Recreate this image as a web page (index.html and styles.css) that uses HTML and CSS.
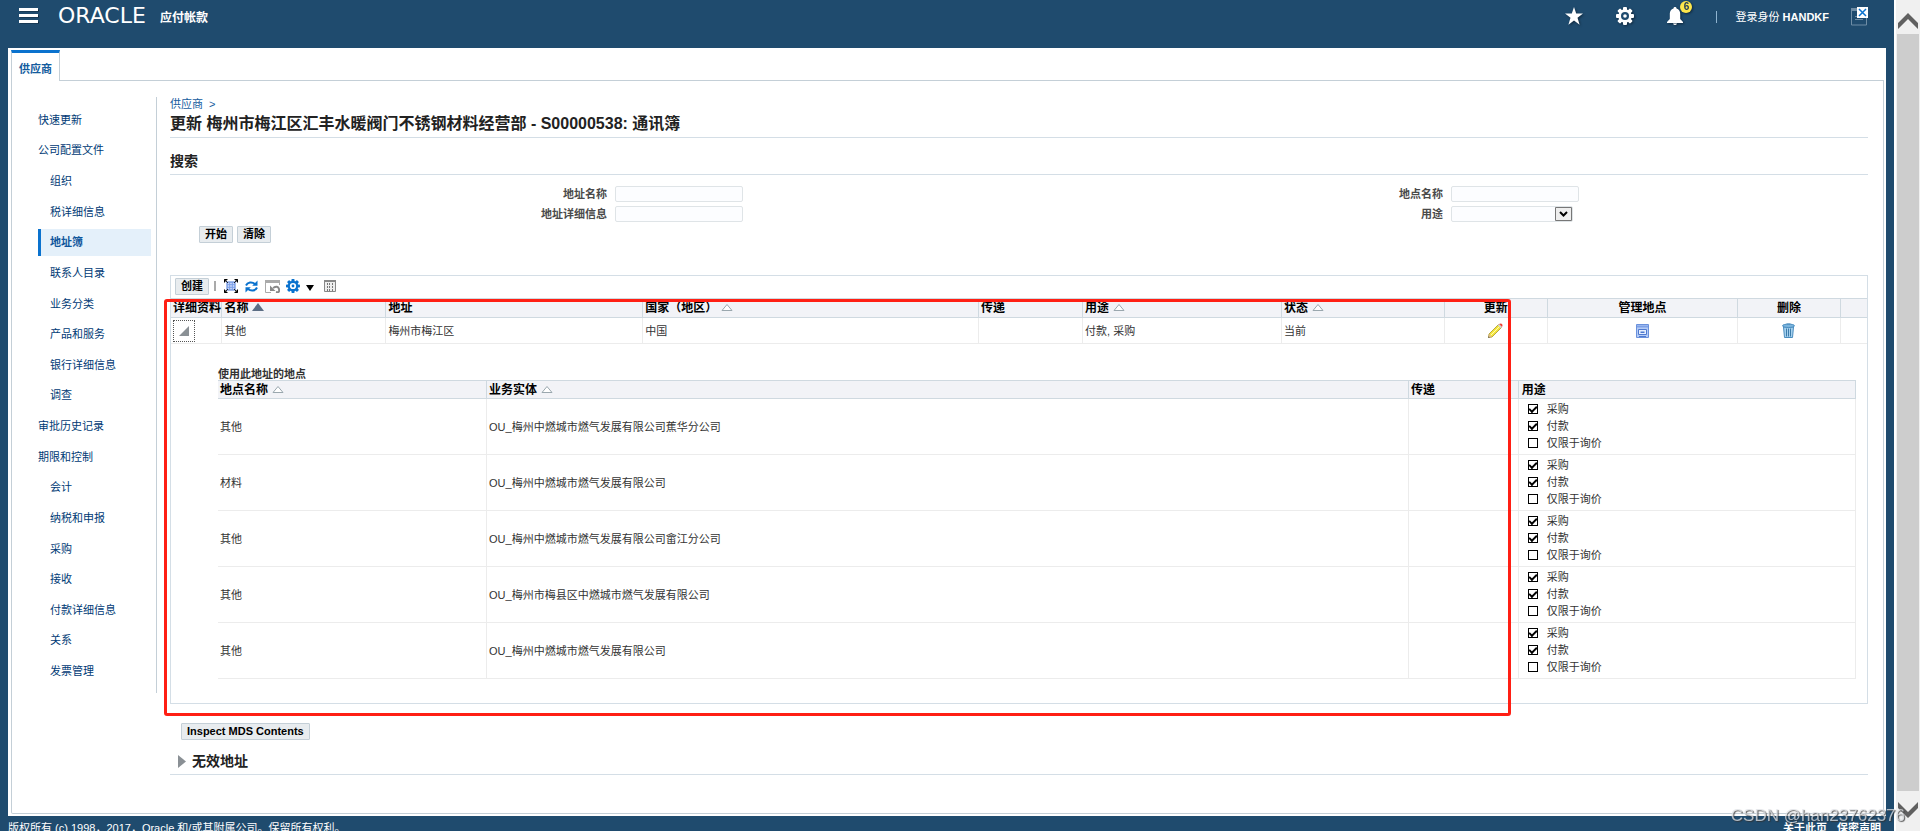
FILE: index.html
```
<!DOCTYPE html>
<html lang="zh-CN">
<head>
<meta charset="utf-8">
<title>供应商 - 通讯簿</title>
<link rel="stylesheet" href="styles.css">
</head>
<body>
<svg class="defs" aria-hidden="true">
  <symbol id="gear" viewBox="0 0 18 18"><g fill="currentColor"><g id="teeth"><rect x="7" y="0" width="4" height="18" rx="1"/><rect x="0" y="7" width="18" height="4" rx="1"/></g><use href="#teeth" transform="rotate(45 9 9)"/></g><circle cx="9" cy="9" r="5.2" fill="none" stroke="currentColor" stroke-width="3"/><circle cx="9" cy="9" r="4" class="gear-hole"/><circle cx="9" cy="9" r="1.8" fill="currentColor"/></symbol>
  <symbol id="sort" viewBox="0 0 12 8"><path d="M1 7.5 6 1.5l5 6z" fill="#fff" stroke="#9aa7ae"/></symbol>
  <symbol id="sorted" viewBox="0 0 12 8"><path d="M0 8 6 0l6 8z" fill="#5b6d84"/></symbol>
</svg>
<div class="app">
  <header class="topbar">
    <button class="icon-btn menu" aria-label="菜单"><svg width="20" height="16" viewBox="0 0 20 16"><path d="M1 2.500h19M1 8.500h19M1 14.500h19" stroke="#10283d" stroke-width="2"/><path d="M0 1.500h19M0 7.500h19M0 13.500h19" stroke="#fff" stroke-width="3"/></svg></button>
    <span class="brand">ORACLE</span>
    <h1 class="product">应付帐款</h1>
    <nav class="tools">
      <button class="icon-btn" aria-label="收藏夹"><svg width="18" height="18" viewBox="0 0 18 18"><path d="M9 0l2.200 6.500H18l-5.500 4.200 2.100 7L9 13.500l-5.600 4.200 2.100-7L0 6.500h6.800z" fill="#fff"/></svg></button>
      <button class="icon-btn" aria-label="设置"><svg class="gear-top" width="18" height="18"><use href="#gear"/></svg></button>
      <button class="icon-btn bell" aria-label="通知"><svg width="16" height="18" viewBox="0 0 16 18"><path d="M8 0c1 0 1.500.6 1.500 1.400C12 2 13.200 4.200 13.200 6.500V12L16 15v1H0v-1l2.800-3V6.500C2.800 4.200 4 2 6.500 1.400 6.500.6 7 0 8 0zM6 16.500h4Q9.500 18 8 18t-2-1.500z" fill="#fff"/></svg><span class="badge">6</span></button>
      <span class="user">登录身份 <b>HANDKF</b></span>
      <svg class="missing" width="17" height="20" viewBox="0 0 17 20"><path d="M.5 3.500v14.500h15V10" fill="none" stroke="#6f8da5"/><path d="M0 1h6v3H0z" fill="#6f8da5"/><path d="M4 9.500h8M4 12.500h8" stroke="#6f8da5"/><path d="M6 0h11v11H6z" fill="#fff"/><path d="M8 2l7 7M15 2l-7 7" stroke="#0a72ce" stroke-width="1.500"/></svg>
    </nav>
  </header>

  <main class="sheet">
    <div class="tabs"><a class="tab" href="#">供应商</a></div>
    <div class="frame">
      <nav class="side">
        <a href="#">快速更新</a>
        <a href="#">公司配置文件</a>
        <a href="#" class="sub">组织</a>
        <a href="#" class="sub">税详细信息</a>
        <a href="#" class="sub current">地址簿</a>
        <a href="#" class="sub">联系人目录</a>
        <a href="#" class="sub">业务分类</a>
        <a href="#" class="sub">产品和服务</a>
        <a href="#" class="sub">银行详细信息</a>
        <a href="#" class="sub">调查</a>
        <a href="#">审批历史记录</a>
        <a href="#">期限和控制</a>
        <a href="#" class="sub">会计</a>
        <a href="#" class="sub">纳税和申报</a>
        <a href="#" class="sub">采购</a>
        <a href="#" class="sub">接收</a>
        <a href="#" class="sub">付款详细信息</a>
        <a href="#" class="sub">关系</a>
        <a href="#" class="sub">发票管理</a>
      </nav>

      <div class="content">
        <div class="crumbs"><a href="#">供应商</a><span>&gt;</span></div>
        <h2 class="title">更新 梅州市梅江区汇丰水暖阀门不锈钢材料经营部 - S00000538: 通讯簿</h2>
        <h3 class="section">搜索</h3>

        <form class="search">
          <label for="addr">地址名称</label><input id="addr" type="text">
          <label for="site">地点名称</label><input id="site" type="text">
          <label for="detail">地址详细信息</label><input id="detail" type="text">
          <label for="use">用途</label>
          <span class="picker"><select id="use"><option></option></select><svg width="17" height="14" viewBox="0 0 17 14"><path d="M.5.500h16v13H.5z" fill="#eee" stroke="#777"/><path d="M5 5l3.500 3.500L12 5" fill="none" stroke="#000" stroke-width="2"/></svg></span>
        </form>
        <div class="actions"><button class="btn">开始</button><button class="btn">清除</button></div>

        <section class="panel">
          <div class="toolbar">
            <button class="btn">创建</button>
            <span class="sep"></span>
            <button class="icon-btn expand" aria-label="展开"><svg width="14" height="14" viewBox="0 0 14 14"><path d="M3 3h8v8H3z" fill="#cfdcf8" stroke="#4a78d8"/><path d="M3 5.700h8M3 8.300h8M5.700 3v8M8.300 3v8" stroke="#7c9fe8"/><path d="M0 0h4L0 4zM14 0v4l-4-4zM0 14v-4l4 4zM14 14h-4l4-4z" fill="#000"/><path d="M0 0l4 4M14 0l-4 4M0 14l4-4M14 14l-4-4" stroke="#222"/></svg></button>
            <button class="icon-btn refresh" aria-label="刷新"><svg width="13" height="13" viewBox="0 0 13 13"><path d="M1 5.500C2.500 2 7 1.500 10 4M12 7.500C10.500 11 6 11.500 3 9" fill="none" stroke="#0a72ce" stroke-width="2"/><path d="M12.500.500v5.300H7.200zM.5 12.500V7.200h5.300z" fill="#0a72ce"/></svg></button>
            <button class="icon-btn detach" aria-label="分离"><svg width="15" height="13" viewBox="0 0 15 13"><path d="M.5 1v11.500H6M14.500 1v4" fill="none" stroke="#aaa"/><path d="M0 0h15v3H0z" fill="#aaa"/><path d="M8 8q5-3 6 1t-3 3" fill="none" stroke="#888" stroke-width="2"/><path d="M5 5.500V11h5.500z" fill="#888"/></svg></button>
            <button class="icon-btn gear-blue" aria-label="操作"><svg width="14" height="14"><use href="#gear"/></svg></button>
            <svg class="caret" width="8" height="6" viewBox="0 0 8 6"><path d="M0 0h8L4 6z"/></svg>
            <button class="icon-btn" aria-label="列"><svg width="12" height="12" viewBox="0 0 12 12"><path d="M.5.500h11v11H.5z" fill="#eee" stroke="#888"/><path d="M0 1h12" stroke="#888" stroke-width="2"/><path d="M3.500 3v8M5.500 3v8M8.500 3v8" stroke="#777" stroke-dasharray="2 1"/></svg></button>
          </div>

          <table class="grid">
            <colgroup><col class="c-detail"><col class="c-name"><col class="c-addr"><col class="c-country"><col class="c-pass"><col class="c-use"><col class="c-state"><col class="c-act"><col class="c-manage"><col class="c-act"><col></colgroup>
            <thead><tr>
              <th>详细资料</th><th>名称<svg class="sort"><use href="#sorted"/></svg></th><th>地址</th><th>国家（地区）<svg class="sort"><use href="#sort"/></svg></th><th>传递</th><th>用途<svg class="sort"><use href="#sort"/></svg></th><th>状态<svg class="sort"><use href="#sort"/></svg></th><th class="mid">更新</th><th class="mid">管理地点</th><th class="mid">删除</th><th></th>
            </tr></thead>
            <tbody>
              <tr class="line">
                <td><button class="toggle" aria-label="隐藏详细资料"><svg width="10" height="10" viewBox="0 0 10 10"><path d="M0 10 10 0v10z" fill="#8a9095"/></svg></button></td>
                <td>其他</td><td>梅州市梅江区</td><td>中国</td><td></td><td>付款, 采购</td><td>当前</td>
                <td class="mid"><button class="icon-btn" aria-label="更新"><svg width="15" height="15" viewBox="0 0 15 15"><path d="M1 11 10.500 1.500l3 3L4 14l-3.500.500z" fill="#f3e53a" stroke="#a8932c" stroke-width=".8"/><path d="M2.500 12.500 12 3" stroke="#fffbb0"/><path d="M9.800 2.200 11 1l3 3-1.200 1.200z" fill="#cfd3d8"/><path d="M11 1q2-1.200 3 0t0 3z" fill="#ee4136"/><path d="M1 11l3 3-3.500.500z" fill="#dcb98a"/><path d="M.3 13.200v1.500h1.500z" fill="#444"/></svg></button></td>
                <td class="mid"><button class="icon-btn" aria-label="管理地点"><svg width="13" height="14" viewBox="0 0 13 14"><path d="M.5.500h12v13H.5z" fill="#b4cbf6" stroke="#6a91dc"/><path d="M1 2.500h11" stroke="#7ea1e6" stroke-width="2"/><path d="M2.500 5.500h8v5h-8z" fill="#e6effe" stroke="#4f7ad0"/><path d="M4.500 7.500h4v1.500h-4z" fill="#4f7ad0"/><path d="M3 12.500h7" stroke="#4f7ad0"/></svg></button></td>
                <td class="mid"><button class="icon-btn" aria-label="删除"><svg width="13" height="15" viewBox="0 0 13 15"><path d="M1.500 4h10l-1 10.500h-8z" fill="#a5d0ee" stroke="#4a8dbf"/><path d="M4.500 5.500v8M6.500 5.500v8M8.500 5.500v8" stroke="#3c7cab"/><ellipse cx="6.500" cy="2.800" rx="6" ry="1.700" fill="#7bb5de" stroke="#4a8dbf"/><path d="M4.500 1h4" stroke="#4a8dbf"/></svg></button></td>
                <td></td>
              </tr>
              <tr><td class="nest" colspan="11">
                <table class="grid inner">
                  <caption>使用此地址的地点</caption>
                  <colgroup><col class="n-site"><col class="n-unit"><col class="n-pass"><col></colgroup>
                  <thead><tr><th>地点名称<svg class="sort"><use href="#sort"/></svg></th><th>业务实体<svg class="sort"><use href="#sort"/></svg></th><th>传递</th><th class="usage">用途</th></tr></thead>
                  <tbody>
                    <tr><td>其他</td><td>OU_梅州中燃城市燃气发展有限公司蕉华分公司</td><td></td><td><div class="checks"><label><input type="checkbox" checked>采购</label><label><input type="checkbox" checked>付款</label><label><input type="checkbox">仅限于询价</label></div></td></tr>
                    <tr><td>材料</td><td>OU_梅州中燃城市燃气发展有限公司</td><td></td><td><div class="checks"><label><input type="checkbox" checked>采购</label><label><input type="checkbox" checked>付款</label><label><input type="checkbox">仅限于询价</label></div></td></tr>
                    <tr><td>其他</td><td>OU_梅州中燃城市燃气发展有限公司畲江分公司</td><td></td><td><div class="checks"><label><input type="checkbox" checked>采购</label><label><input type="checkbox" checked>付款</label><label><input type="checkbox">仅限于询价</label></div></td></tr>
                    <tr><td>其他</td><td>OU_梅州市梅县区中燃城市燃气发展有限公司</td><td></td><td><div class="checks"><label><input type="checkbox" checked>采购</label><label><input type="checkbox" checked>付款</label><label><input type="checkbox">仅限于询价</label></div></td></tr>
                    <tr><td>其他</td><td>OU_梅州中燃城市燃气发展有限公司</td><td></td><td><div class="checks"><label><input type="checkbox" checked>采购</label><label><input type="checkbox" checked>付款</label><label><input type="checkbox">仅限于询价</label></div></td></tr>
                  </tbody>
                </table>
              </td></tr>
            </tbody>
          </table>
          <div class="highlight"></div>
        </section>

        <div class="inspect"><button class="btn">Inspect MDS Contents</button></div>
        <h3 class="section folded"><svg width="8" height="13" viewBox="0 0 8 13"><path d="M0 0l8 6.500L0 13z" fill="#8a9095"/></svg>无效地址</h3>
      </div>
    </div>
  </main>

  <footer class="foot">
    <span>版权所有 (c) 1998，2017，Oracle 和/或其附属公司。保留所有权利。</span>
    <nav><a href="#">关于此页</a><a href="#">保密声明</a></nav>
  </footer>
</div>
<div class="scroll">
  <svg width="20" height="16" viewBox="0 0 20 16"><path d="M0 10 10 0l10 10v6L10 6 0 16z" fill="#606060"/></svg>
  <div class="thumb"></div>
  <svg width="20" height="16" viewBox="0 0 20 16"><path d="M0 6l10 10L20 6V0L10 10 0 0z" fill="#606060"/></svg>
</div>
<div class="watermark">CSDN @han23762376</div>
</body>
</html>
```
FILE: styles.css
```
* { box-sizing: border-box; }
body {
  margin: 0;
  height: 100vh;
  display: flex;
  overflow: hidden;
  background: #fff;
  color: #333;
  font: 11px/16px "Liberation Sans", "Noto Sans CJK SC", sans-serif;
}
button, input, select { font: inherit; color: inherit; margin: 0; }
a { color: #145c9e; text-decoration: none; }
h1, h2, h3 { margin: 0; }
svg { display: block; flex: none; }
.defs { position: absolute; width: 0; height: 0; }
.icon-btn { padding: 0; border: 0; background: none; display: block; }

.app {
  flex: 1;
  min-width: 0;
  display: flex;
  flex-direction: column;
  padding: 0 8px;
  background: #1f4b6e;
}

/* top bar */
.topbar { height: 48px; flex: none; display: flex; align-items: flex-start; color: #fff; }
.menu { margin: 8px 0 0 11px; }
.brand { margin: 4px 0 0 19px; width: 102px; font: 22px/24px "DejaVu Sans", sans-serif; }
.product { margin-top: 9px; font-size: 12px; line-height: 18px; }
.tools { margin-left: auto; padding: 7px 18px 0 0; display: flex; align-items: flex-start; }
.tools .icon-btn { margin-right: 33px; filter: drop-shadow(1px 1px 1px #10283d); }
.gear-top { color: #fff; --hole: #1f4b6e; }
.gear-hole { fill: var(--hole, #fff); }
.bell { position: relative; }
.badge {
  position: absolute;
  left: 13px;
  top: -6px;
  width: 12px;
  height: 12px;
  border-radius: 6px;
  background: #fde74c;
  color: #1f3a56;
  font: bold 10px/12px "Liberation Sans", sans-serif;
  text-align: center;
}
.user { margin: 4px 22px 0 0; padding-left: 18px; line-height: 12px; border-left: 1px solid #8fb4d0; white-space: nowrap; }

/* sheet */
.sheet { flex: 1; min-height: 0; background: #fff; padding: 2px 2px 2px 3px; display: flex; flex-direction: column; }
.tabs { display: flex; height: 31px; flex: none; }
.tabs::after { content: ""; flex: 1; border-bottom: 1px solid #c4cfd7; }
.tab {
  padding: 0 7px;
  line-height: 33px;
  font-weight: bold;
  border: 1px solid #c4cfd7;
  border-top: 3px solid #0a72ce;
  border-bottom: 0;
}
.frame { flex: 1; min-height: 0; display: flex; align-items: flex-start; border: 1px solid #c4cfd7; border-top: 0; border-radius: 0 0 2px 2px; }

/* side navigation */
.side {
  width: 145px;
  height: 596px;
  flex: none;
  margin-top: 16px;
  padding: 9px 5px 8px 26px;
  border-right: 1px solid #c4cfd7;
  display: flex;
  flex-direction: column;
  gap: 3px;
}
.side a { flex: 1; display: flex; align-items: center; color: #003a75; }
.side .sub { padding-left: 12px; }
.side .current { padding-left: 9px; border-left: 3px solid #0a72ce; background: #e4f0fa; color: #0f569c; font-weight: bold; }

/* content */
.content { flex: 1; min-width: 0; padding: 16px 15px 0 13px; }
.crumbs { display: flex; gap: 6px; color: #145c9e; line-height: 15px; }
.title { font-size: 16px; line-height: 24px; padding-bottom: 1px; color: #222; border-bottom: 1px solid #d4dee6; }
.section { font-size: 14px; line-height: 20px; margin-top: 13px; padding-bottom: 3px; color: #222; border-bottom: 1px solid #d4dee6; }

.search {
  display: grid;
  grid-template-columns: 437fr 392fr 428fr 417fr;
  gap: 4px 8px;
  padding: 11px 0 4px;
}
.search label { text-align: right; font-weight: bold; color: #4a4a4a; line-height: 16px; }
.search input, .search select {
  display: block;
  width: 128px;
  height: 16px;
  padding: 0 2px;
  border: 1px solid #dfe4e7;
  border-radius: 2px;
  background: #fcfdff;
  appearance: none;
}
.picker { position: relative; width: 122px; }
.search select { width: 100%; }
.picker svg { position: absolute; right: 1px; top: 1px; pointer-events: none; }

.btn {
  height: 17px;
  padding: 0 5px;
  border: 1px solid #c4cfd7;
  border-radius: 1px;
  background: #e8ecef;
  color: #000;
  font-weight: bold;
  line-height: 15px;
  white-space: nowrap;
}
.actions { display: flex; gap: 4px; padding-left: 29px; }

/* results panel */
.panel { position: relative; margin-top: 32px; border: 1px solid #d4dee6; }
.toolbar { display: flex; align-items: center; height: 22px; padding: 0 0 2px 4px; }
.sep { width: 2px; height: 10px; margin: 0 8px 0 5px; background: #aaa; }
.expand, .refresh { margin-right: 7px; }
.detach { margin-right: 6px; }
.gear-blue { margin-right: 6px; color: #0a72ce; }
.caret { margin: 3px 10px 0 0; }

.grid { width: 100%; table-layout: fixed; border-collapse: collapse; }
.grid th {
  height: 19px;
  padding: 0 0 0 2px;
  text-align: left;
  font-size: 12px;
  line-height: 17px;
  color: #000;
  background: #f2f3f7;
  border: solid #cfd9e0;
  border-width: 1px 1px 1px 0;
  white-space: nowrap;
}
.grid td { padding: 0 0 0 2px; border: solid #ececec; border-width: 0 1px 1px 0; }
.grid > thead > tr > th:last-child, .grid .line td:last-child { border-right: 0; }
.grid .line td { height: 26px; }
.grid th.mid, .grid td.mid { text-align: center; padding: 0; }
.mid .icon-btn { margin: 0 auto; }
.sort { display: inline-block; width: 12px; height: 8px; margin-left: 4px; vertical-align: 1px; }
.c-detail { width: 3%; }
.c-name { width: 9.67%; }
.c-addr { width: 15.15%; }
.c-country { width: 19.8%; }
.c-pass { width: 6.13%; }
.c-use { width: 11.73%; }
.c-state { width: 9.6%; }
.c-act { width: 6.08%; }
.c-manage { width: 11.2%; }
.toggle { display: flex; align-items: center; justify-content: center; width: 22px; height: 22px; padding: 0; border: 1px dotted #555; background: none; }

.grid td.nest { padding: 24px 11px 24px 47px; border: 0; }
.inner caption { text-align: left; font-weight: bold; line-height: 12px; }
.n-site { width: 16.4%; }
.n-unit { width: 56.3%; }
.n-pass { width: 6.7%; }
.grid.inner th { height: 18px; line-height: 16px; }
.grid.inner th.usage { padding-left: 3px; border-right: 1px solid #cfd9e0; }
.inner td { height: 56px; }
.checks { display: flex; flex-direction: column; padding: 0 0 2px 7px; }
.checks label { display: flex; align-items: center; gap: 9px; height: 17px; }
.checks input {
  appearance: none;
  width: 10px;
  height: 10px;
  border: 1px solid #000;
  background: #fff;
  display: grid;
  place-items: center;
}
.checks input:checked::after {
  content: "";
  width: 6px;
  height: 3px;
  border: solid #000;
  border-width: 0 0 2px 2px;
  transform: rotate(-45deg);
}

.highlight {
  position: absolute;
  left: -7px;
  top: 23px;
  right: 356px;
  bottom: -13px;
  border: 3px solid #ff1f14;
  border-radius: 3px;
  pointer-events: none;
}
.inspect { padding: 19px 0 0 11px; display: flex; }
.folded { display: flex; align-items: center; gap: 6px; padding-left: 8px; margin-top: 11px; }

/* footer and window edge */
.foot { height: 15px; flex: none; display: flex; justify-content: space-between; padding: 4px 5px 0 0; color: #fff; white-space: nowrap; }
.foot nav { display: flex; gap: 10px; }
.foot a { color: #fff; font-weight: bold; }
.scroll {
  width: 26px;
  flex: none;
  display: flex;
  flex-direction: column;
  align-items: center;
  gap: 5px;
  padding: 13px 1px;
  background: #f0f0f0;
  border-left: 2px solid #fff;
}
.thumb { flex: 1; align-self: stretch; background: #cdcdcd; margin-bottom: 6px; }
.watermark {
  position: fixed;
  right: 15px;
  bottom: 5px;
  font-size: 17px;
  line-height: 20px;
  color: rgba(225, 228, 232, 0.75);
  text-shadow: 1px 1px 1px rgba(50, 50, 50, 0.8);
}
```
